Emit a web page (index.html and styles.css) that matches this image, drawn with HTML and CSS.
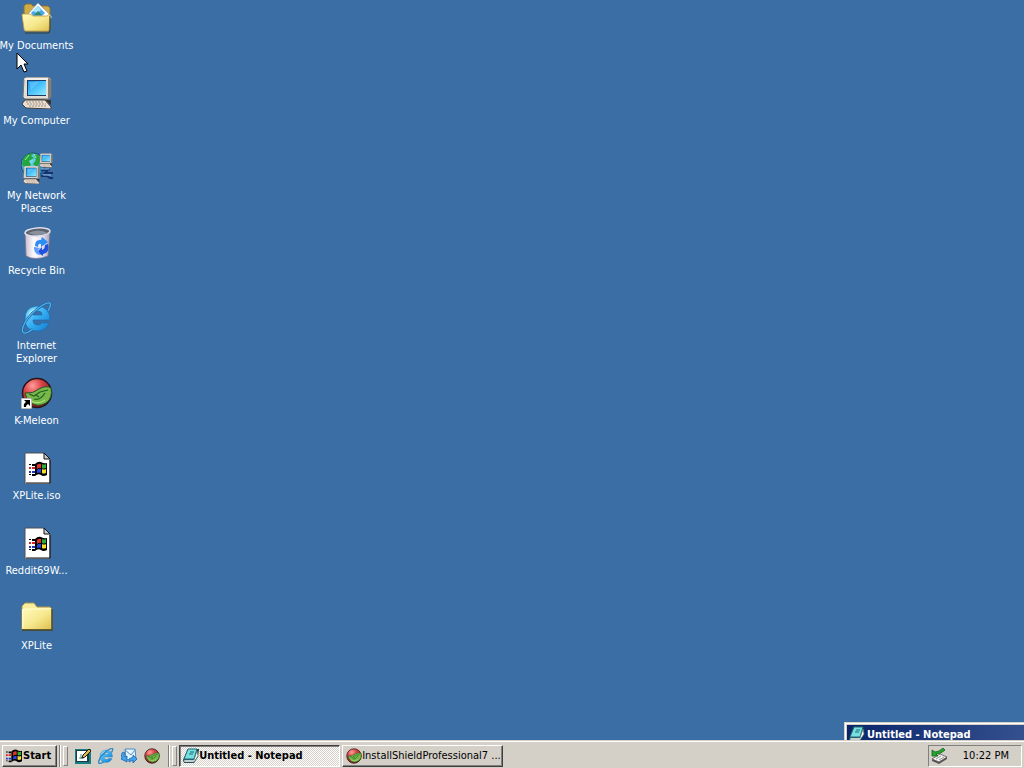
FILE: index.html
```html
<!DOCTYPE html>
<html lang="en">
<head>
<meta charset="utf-8">
<title>Desktop</title>
<link rel="stylesheet" href="styles.css">
</head>
<body>
<svg class="defs" aria-hidden="true">
  <defs>
    <linearGradient id="paper" x2="1" y2="1"><stop stop-color="#fffbbb"/><stop offset=".55" stop-color="#f6e78c"/><stop offset="1" stop-color="#dfc04f"/></linearGradient>
    <linearGradient id="screen" x2="1" y2="1"><stop stop-color="#1693ee"/><stop offset=".5" stop-color="#4cc4fb"/><stop offset="1" stop-color="#90eafe"/></linearGradient>
    <linearGradient id="bin"><stop stop-color="#c9bccb"/><stop offset=".35" stop-color="#fdfaff"/><stop offset=".7" stop-color="#e6e0f0"/><stop offset="1" stop-color="#a7a3b8"/></linearGradient>
    <linearGradient id="ieg" x2="1" y2="1"><stop stop-color="#8fe0ff"/><stop offset=".5" stop-color="#35aef2"/><stop offset="1" stop-color="#1379d0"/></linearGradient>
    <radialGradient id="red" cx=".35" cy=".25" r=".8"><stop stop-color="#ff9d98"/><stop offset=".4" stop-color="#d94248"/><stop offset="1" stop-color="#7c1218"/></radialGradient>
    <radialGradient id="globe" cx=".35" cy=".3" r=".8"><stop stop-color="#7be9f7"/><stop offset="1" stop-color="#1670b0"/></radialGradient>
    <symbol id="flag" viewBox="0 0 18 16">
      <path d="M6 3Q9 0 12 1Q15 3 18 2V14Q14 16 12 14Q9 12 6 15Z" fill="#000"/>
      <path d="M8 4Q10 2 12 3V7Q10 6 8 8Z" fill="#e63429"/>
      <path d="M13 3Q15 4 17 3V7Q14 8 13 7Z" fill="#2fac36"/>
      <path d="M8 9Q10 7 12 8V12Q10 11 8 12Z" fill="#2746dc"/>
      <path d="M13 8Q15 9 17 8V12Q14 13 13 12Z" fill="#fbdd29"/>
      <path d="M3 3H6V5H3ZM3 13H6V15H3ZM0 3H2V4H0ZM0 13H2V14H0Z" fill="#000"/>
      <path d="M3 6H6V8H3ZM0 6H2V8H0Z" fill="#d72525"/><path d="M3 10H6V12H3ZM0 10H2V12H0Z" fill="#2038b8"/>
    </symbol>
    <symbol id="documents" viewBox="0 0 32 32">
      <path d="M3 9V4L5 2H10L12 4H27L29 6V27L27 29H4Z" fill="#cfad46" stroke="#8b7233"/>
      <path d="M7 12L17 1L31 15L27 18H9Z" fill="#fff" stroke="#8b9cb0" stroke-width=".7"/>
      <path d="M10 11L17 4L24 11L20 15H13Z" fill="#49a8e8"/>
      <path d="M12 9L17 4L20 8L16 11Z" fill="#a6e5ff"/><path d="M13 13L17 9L21 13Z" fill="#37876c"/>
      <path d="M1 13Q1 12 2 12L9 12L12 14H26L29 12L28 28Q28 29 27 29H5Q3 29 3 27Z" fill="url(#paper)" stroke="#c59c3c" stroke-width=".8"/>
      <path d="M4 31H28L29 28V14" fill="none" stroke="#35412e"/>
    </symbol>
    <symbol id="pc" viewBox="0 0 32 32">
      <path d="M3 2L5 0H27L30 2V20L28 22H4L2 20Z" fill="#e2dfd6" stroke="#77746f"/>
      <path d="M27 1L30 3V20L27 22Z" fill="#827d76"/><path d="M3 2H27" stroke="#fff"/>
      <rect x="6" y="3" width="19" height="16" fill="#213a64"/><rect x="7" y="4" width="18" height="14" fill="url(#screen)"/>
      <path d="M8 5H18L10 13Z" fill="#9de2ff" opacity=".35"/>
      <path d="M5 22H26L29 26H2Z" fill="#6a655d"/>
      <path d="M4 23H24L30 30V32L5 31L1 27Z" fill="#ebe0d3" stroke="#44403d"/>
      <path d="M5 25H23M6 27H25M8 29H25" stroke="#9d8d7e" stroke-dasharray="2 1"/>
      <path d="M25 23H30V28L27 26Z" fill="#383632"/>
    </symbol>
    <symbol id="network" viewBox="0 0 32 32">
      <circle cx="12" cy="13" r="12" fill="url(#globe)" stroke="#164b70"/>
      <path d="M2 7Q5 1 13 1L10 4L13 6L8 9L10 13L5 16L1 13ZM13 3L18 3L20 9L16 15L12 12L15 8ZM3 18L7 20L7 24Z" fill="#27a43b"/>
      <path d="M4 8L8 3M13 2L15 6" stroke="#9cf0a2"/>
      <svg x="18" y="1" width="14" height="15"><use href="#pc"/></svg>
      <svg x="1" y="14" width="19" height="18"><use href="#pc"/></svg>
      <path d="M20 18H27L24 21H32M20 24H26L29 26H32" fill="none" stroke="#17326b" stroke-width="2"/><path d="M20 17H28M22 23H30" stroke="#8dbdf0"/>
    </symbol>
    <symbol id="recycle" viewBox="0 0 32 32">
      <path d="M4 5L5 29Q14 34 27 29L29 5Z" fill="url(#bin)" stroke="#77758b" stroke-width=".8"/>
      <ellipse cx="16.5" cy="5" rx="12.5" ry="4" transform="rotate(-4 16 5)" fill="#59616d" stroke="#dedce9" stroke-width="1.5"/>
      <path d="M7 6Q17 1 27 6Q17 10 7 6Z" fill="#89919c"/>
      <path d="M14 19Q14 12 20 13L21 10L27 15L20 20V17Q17 16 17 20Z" fill="#2c8ef5"/>
      <path d="M27 17Q29 26 22 27V29L16 25L21 20V23Q24 22 24 18Z" fill="#2052df"/>
      <path d="M13 20L19 21L17 23Q18 26 20 28Q14 28 13 22Z" fill="#5d9dff"/>
    </symbol>
    <symbol id="ie" viewBox="0 0 32 32">
      <path d="M29 18H12Q12 23 17 23Q20 23 21 21H28Q25 29 16 29Q4 29 4 17Q4 5 16 4Q29 5 29 18ZM12 13H21Q21 9 17 9Q12 9 12 13Z" fill="url(#ieg)" fill-rule="evenodd" stroke="#1471b8" stroke-width=".7"/>
      <path d="M7 15Q9 7 17 7" fill="none" stroke="#b5efff" stroke-width="1.5"/>
      <path d="M27 9Q32 0 27 1Q22 2 15 8Q5 16 2 25Q0 32 5 31Q8 30 12 27" fill="none" stroke="#1667ac" stroke-width="2.4"/>
      <path d="M27 9Q32 0 27 1Q22 2 15 8Q5 16 2 25Q0 32 5 31Q8 30 12 27" fill="none" stroke="#59b3e6" stroke-width="1.2"/>
    </symbol>
    <symbol id="melon" viewBox="0 0 32 32">
      <circle cx="16" cy="16" r="14.5" fill="url(#red)" stroke="#291515" stroke-width="1.5"/>
      <path d="M4 16Q12 17 18 12Q25 8 30 11Q32 21 25 26Q16 31 9 25Q5 21 4 16Z" fill="#78b849" stroke="#285326"/>
      <path d="M8 17L13 19L19 15L27 13M13 22Q19 24 24 16M15 18L18 20" fill="none" stroke="#1d6124" stroke-width="1.2"/>
      <path d="M10 24Q17 28 24 23" fill="none" stroke="#b6e875"/>
    </symbol>
    <symbol id="shortcut" viewBox="0 0 11 11">
      <path d="M0 0H11V11H0Z" fill="#fff" stroke="#777"/><path d="M3 2H9V8L7 6Q5 7 5 9H3Q2 6 5 4Z" fill="#000"/>
    </symbol>
    <symbol id="file" viewBox="0 0 32 32">
      <path d="M4 1H23L29 7V32H4Z" fill="#fff" stroke="#4c5056"/><path d="M23 1V7H29Z" fill="#c6cbd0" stroke="#111"/>
      <path d="M29 8V31H5" fill="none" stroke="#111"/>
      <svg x="8" y="9" width="18" height="16"><use href="#flag"/></svg>
    </symbol>
    <symbol id="folder" viewBox="0 0 32 32">
      <path d="M1 8V4L4 1H13L16 5H29L31 7V28H1Z" fill="#f9ed9e" stroke="#aa9549"/>
      <path d="M1 7H30V27H1Z" fill="url(#paper)"/><path d="M1 28H31V7" fill="none" stroke="#3e3c20" stroke-width="1.3"/><path d="M2 26V7H29" fill="none" stroke="#fffccf"/>
    </symbol>
    <symbol id="notepad" viewBox="0 0 16 16">
      <path d="M5 1H16L15 9L11 15H1L0 12Z" fill="#153d45"/><path d="M5 1H14L11 11H1Z" fill="#78e0df" stroke="#206b75"/>
      <path d="M1 12H11L14 3L15 8L11 14H1Z" fill="#fff" stroke="#527a80" stroke-width=".7"/><path d="M7 4H11M6 6H10" stroke="#176b79"/>
    </symbol>
    <symbol id="show-desktop" viewBox="0 0 16 16">
      <path d="M0 1H16V16H0Z" fill="#187e84"/><path d="M1 2H14V14H1Z" fill="#193b42"/><path d="M2 3H12V13H2Z" fill="#fff"/>
      <path d="M4 10H9M6 6V11" stroke="#4d9292"/><path d="M7 10L8 7L14 1L16 3L10 9Z" fill="#dfb848" stroke="#251d10"/>
    </symbol>
    <symbol id="mail" viewBox="0 0 16 16">
      <path d="M4 1H14L15 11L5 12Z" fill="#e5f4ff" stroke="#478ac1"/><path d="M4 2L10 7L14 2" fill="none" stroke="#578cb9"/>
      <path d="M2 4Q-1 6 1 10L0 11L6 14L6 8L4 9Q2 7 4 5ZM8 11L12 9V7L16 11L12 15V12L8 14Z" fill="#42a5ee" stroke="#1763b3" stroke-width=".8"/>
    </symbol>
    <symbol id="eject" viewBox="0 0 16 16">
      <path d="M1 11L9 6L16 9L8 14Z" fill="#f1f0ee" stroke="#737373"/><path d="M1 11V13L8 16L16 11V9L8 14Z" fill="#555"/>
      <path d="M5 11L10 8M8 12L13 9" stroke="#999"/>
      <path d="M1 2V8H7L5 6Q10 6 14 2L12 0Q8 4 4 4Z" fill="#26a52d" stroke="#12661a" stroke-width=".8"/>
    </symbol>
  </defs>
</svg>

<main class="desktop">
  <nav class="icons" aria-label="Desktop">
    <a class="icon" href="#"><svg><use href="#documents"/></svg><span>My&nbsp;Documents</span></a>
    <a class="icon" href="#"><svg><use href="#pc"/></svg><span>My Computer</span></a>
    <a class="icon" href="#"><svg><use href="#network"/></svg><span>My Network Places</span></a>
    <a class="icon" href="#"><svg><use href="#recycle"/></svg><span>Recycle Bin</span></a>
    <a class="icon" href="#"><svg><use href="#ie"/></svg><span>Internet Explorer</span></a>
    <a class="icon" href="#"><svg><use href="#melon"/><use href="#shortcut" y="21" width="11" height="11"/></svg><span>K-Meleon</span></a>
    <a class="icon" href="#"><svg><use href="#file"/></svg><span>XPLite.iso</span></a>
    <a class="icon" href="#"><svg><use href="#file"/></svg><span>Reddit69W...</span></a>
    <a class="icon" href="#"><svg><use href="#folder"/></svg><span>XPLite</span></a>
  </nav>
  <section class="window" aria-label="Untitled - Notepad">
    <h1 class="titlebar"><svg class="small"><use href="#notepad"/></svg>Untitled - Notepad</h1>
  </section>
  <svg class="cursor" viewBox="0 0 13 21"><path d="M1 1V17L5 13L8 20L11 19L8 12H12Z" fill="#fff" stroke="#000"/></svg>
</main>

<footer class="taskbar">
  <button class="start"><svg><use href="#flag"/></svg>Start</button>
  <div class="band launch">
    <button class="quick" aria-label="Show Desktop"><svg class="small"><use href="#show-desktop"/></svg></button>
    <button class="quick" aria-label="Internet Explorer"><svg class="small"><use href="#ie"/></svg></button>
    <button class="quick" aria-label="Outlook Express"><svg class="small"><use href="#mail"/></svg></button>
    <button class="quick" aria-label="K-Meleon"><svg class="small"><use href="#melon"/></svg></button>
  </div>
  <div class="band tasks">
    <button class="task active"><svg class="small"><use href="#notepad"/></svg><span>Untitled - Notepad</span></button>
    <button class="task"><svg class="small"><use href="#melon"/></svg><span>InstallShieldProfessional7 ...</span></button>
  </div>
  <div class="tray"><svg class="small"><use href="#eject"/></svg><time>10:22 PM</time></div>
</footer>
</body>
</html>
```
FILE: styles.css
```css
* { box-sizing: border-box; }
body {
  margin: 0;
  height: 100vh;
  display: flex;
  flex-direction: column;
  overflow: hidden;
  background: #3a6ea5;
  font: 11px/13px Tahoma, "DejaVu Sans Condensed", "DejaVu Sans", sans-serif;
  color: #000;
}
button { font: inherit; color: inherit; margin: 0; }
.defs { position: absolute; width: 0; height: 0; }
.small { width: 16px; height: 16px; flex: none; }

.desktop { position: relative; flex: 1; min-height: 0; overflow: hidden; }
.icons {
  display: grid;
  grid-auto-rows: 75px;
  justify-content: start;
  grid-template-columns: 73px;
  padding-top: 2px;
}
.icon {
  display: flex;
  flex-direction: column;
  align-items: center;
  gap: 5px;
  color: #fff;
  text-align: center;
  text-decoration: none;
}
.icon svg { width: 32px; height: 32px; flex: none; }

.window {
  position: absolute;
  left: calc(100% - 180px);
  bottom: -460px;
  width: 660px;
  height: 478px;
  padding: 2px;
  background: #d4d0c8;
  border: 1px solid #d4d0c8;
  box-shadow: inset 1px 1px #fff;
}
.titlebar {
  display: flex;
  align-items: center;
  gap: 2px;
  height: 18px;
  margin: 0;
  padding-left: 2px;
  background: linear-gradient(90deg, #0a246a, #a6caf0);
  color: #fff;
  font-size: 11px;
}
.cursor { position: absolute; left: 16px; top: 52px; width: 13px; height: 21px; }

.taskbar {
  display: flex;
  align-items: center;
  height: 28px;
  padding: 2px 2px 0;
  background: #d4d0c8;
  border-top: 1px solid #d4d0c8;
  box-shadow: inset 0 1px #fff;
}
.start, .task {
  display: flex;
  align-items: center;
  height: 22px;
  background: #d4d0c8;
  border: 1px solid;
  border-color: #fff #404040 #404040 #fff;
  box-shadow: inset -1px -1px #808080;
}
.start { gap: 1px; padding: 0 5px 0 3px; margin-right: 2px; font-weight: bold; }
.start svg { width: 16px; height: 16px; }
.band {
  display: flex;
  align-items: center;
  height: 22px;
  border-left: 1px solid #808080;
  box-shadow: inset 1px 0 #fff;
}
.band::before {
  content: "";
  width: 3px;
  height: 18px;
  margin-left: 3px;
  border: 1px solid;
  border-color: #fff #808080 #808080 #fff;
}
.launch { gap: 7px; margin-right: 8px; }
.quick { display: flex; padding: 0; border: 0; background: none; }
.tasks { flex: 1; gap: 2px; min-width: 0; }
.task { width: 161px; gap: 0; padding: 0 3px; white-space: nowrap; overflow: hidden; }
.task.active {
  font-weight: bold;
  border-color: #404040 #fff #fff #404040;
  box-shadow: inset 1px 1px #808080;
  background: repeating-conic-gradient(#fff 0 25%, #d4d0c8 0 50%) 0 0 / 2px 2px;
}
.tray {
  display: flex;
  align-items: center;
  justify-content: space-between;
  width: 94px;
  height: 22px;
  padding: 0 12px 0 2px;
  border: 1px solid;
  border-color: #808080 #fff #fff #808080;
}
```
